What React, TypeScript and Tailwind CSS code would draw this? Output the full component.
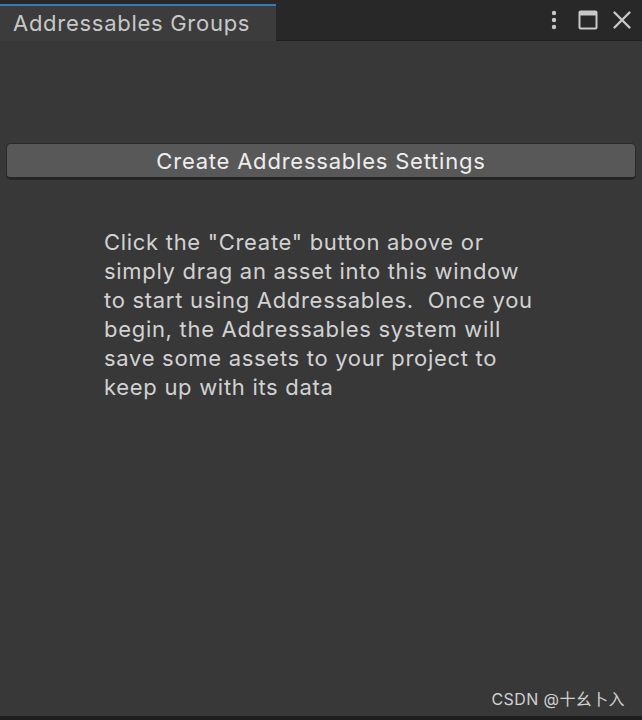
import React from "react";

export default function App() {
  const font = { fontFamily: "Inter, 'Noto Sans', sans-serif" };
  return (
    <div className="w-[642px] h-[720px] bg-[#383838] flex flex-col overflow-hidden" style={font}>
      <div className="h-[41px] bg-[#282828] flex items-end shrink-0">
        <div className="w-[276px] h-[37px] bg-[#3c3c3c] border-t-2 border-[#3a79bb] flex items-center pl-[13px] text-[22px] text-[#c8c8c8] tracking-[0.72px] leading-none pb-[1px]">
          Addressables Groups
        </div>
        <div className="flex-1 h-[41px] border-b border-[#1e1e1e] flex items-center justify-end pr-[10px] gap-[14px]">
          <svg width="8" height="20" viewBox="0 0 8 20" className="mr-[6px]">
            <circle cx="4" cy="3" r="2.2" fill="#c8c8c8" />
            <circle cx="4" cy="10" r="2.2" fill="#c8c8c8" />
            <circle cx="4" cy="17" r="2.2" fill="#c8c8c8" />
          </svg>
          <svg width="20" height="20" viewBox="0 0 20 20">
            <rect x="1.5" y="1.5" width="17" height="17" rx="1" fill="none" stroke="#c8c8c8" strokeWidth="2" />
            <rect x="1.5" y="1.5" width="17" height="4" fill="#c8c8c8" />
          </svg>
          <svg width="20" height="20" viewBox="0 0 20 20">
            <path d="M2.5 2.5 L17.5 17.5 M17.5 2.5 L2.5 17.5" stroke="#c8c8c8" strokeWidth="2.4" strokeLinecap="round" />
          </svg>
        </div>
      </div>
      <div className="flex-1 flex flex-col relative">
        <div className="px-[7px] pt-[103px]">
          <div className="h-[35px] bg-[#585858] rounded-[4px] border-b-2 border-[#242424] shadow-[0_0_0_1px_#2a2a2a] flex items-center justify-center text-[22px] text-[#eeeeee] leading-none tracking-[0.78px]">
            Create Addressables Settings
          </div>
        </div>
        <div className="pl-[104px] pt-[49px] text-[22px] leading-[29px] text-[#d2d2d2] tracking-[0.7px]">
          <div>Click the "Create" button above or</div>
          <div>simply drag an asset into this window</div>
          <div className="whitespace-pre">to start using Addressables.  Once you</div>
          <div>begin, the Addressables system will</div>
          <div>save some assets to your project to</div>
          <div>keep up with its data</div>
        </div>
        <div className="absolute right-[17px] bottom-[5px] text-[16px] tracking-[0.4px] text-[#d0d0d0]" style={{ fontFamily: "Inter, 'Noto Sans CJK SC', sans-serif" }}>
          CSDN @十幺卜入
        </div>
      </div>
      <div className="h-[4px] bg-[#1e1e1e] shrink-0" />
    </div>
  );
}
